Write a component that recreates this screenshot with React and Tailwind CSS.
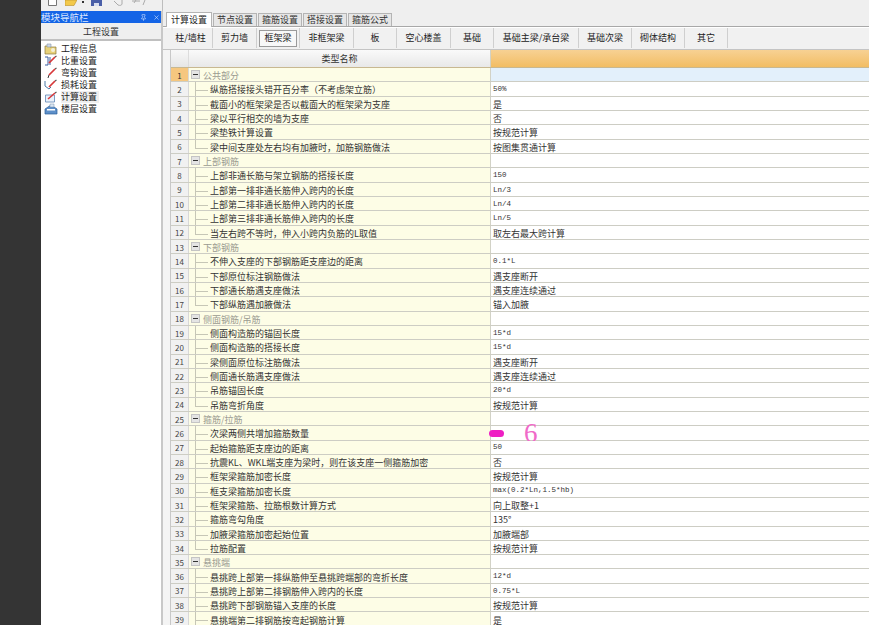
import { X, Pin } from 'lucide-react';

const cjk = '"Noto Sans CJK SC", "Liberation Sans", sans-serif';

const tabs = [
  { name: '计算设置', w: 'w-[46px]', active: true },
  { name: '节点设置', w: 'w-[44px]' },
  { name: '箍筋设置', w: 'w-[44px]' },
  { name: '搭接设置', w: 'w-[44px]' },
  { name: '箍筋公式', w: 'w-[44px]' },
];

const subTabs = [
  { name: '柱/墙柱', w: 'w-[44px]' },
  { name: '剪力墙', w: 'w-[44px]' },
  { name: '框架梁', w: 'w-[43px]', active: true },
  { name: '非框架梁', w: 'w-[54px]' },
  { name: '板', w: 'w-[43px]' },
  { name: '空心楼盖', w: 'w-[54px]' },
  { name: '基础', w: 'w-[43px]' },
  { name: '基础主梁/承台梁', w: 'w-[85px]' },
  { name: '基础次梁', w: 'w-[53px]' },
  { name: '砌体结构', w: 'w-[53px]' },
  { name: '其它', w: 'w-[43px]' },
];

// g = group row, last = last child of a group
const rows = [
  { name: '公共部分', g: true },
  { name: '纵筋搭接接头错开百分率（不考虑架立筋）', value: '50%' },
  { name: '截面小的框架梁是否以截面大的框架梁为支座', value: '是' },
  { name: '梁以平行相交的墙为支座', value: '否' },
  { name: '梁垫铁计算设置', value: '按规范计算' },
  { name: '梁中间支座处左右均有加腋时，加筋钢筋做法', value: '按图集贯通计算', last: true },
  { name: '上部钢筋', g: true },
  { name: '上部非通长筋与架立钢筋的搭接长度', value: '150' },
  { name: '上部第一排非通长筋伸入跨内的长度', value: 'Ln/3' },
  { name: '上部第二排非通长筋伸入跨内的长度', value: 'Ln/4' },
  { name: '上部第三排非通长筋伸入跨内的长度', value: 'Ln/5' },
  { name: '当左右跨不等时，伸入小跨内负筋的L取值', value: '取左右最大跨计算', last: true },
  { name: '下部钢筋', g: true },
  { name: '不伸入支座的下部钢筋距支座边的距离', value: '0.1*L' },
  { name: '下部原位标注钢筋做法', value: '遇支座断开' },
  { name: '下部通长筋遇支座做法', value: '遇支座连续通过' },
  { name: '下部纵筋遇加腋做法', value: '锚入加腋', last: true },
  { name: '侧面钢筋/吊筋', g: true },
  { name: '侧面构造筋的锚固长度', value: '15*d' },
  { name: '侧面构造筋的搭接长度', value: '15*d' },
  { name: '梁侧面原位标注筋做法', value: '遇支座断开' },
  { name: '侧面通长筋遇支座做法', value: '遇支座连续通过' },
  { name: '吊筋锚固长度', value: '20*d' },
  { name: '吊筋弯折角度', value: '按规范计算', last: true },
  { name: '箍筋/拉筋', g: true },
  { name: '次梁两侧共增加箍筋数量', mark: true },
  { name: '起始箍筋距支座边的距离', value: '50' },
  { name: '抗震KL、WKL端支座为梁时，则在该支座一侧箍筋加密', value: '否' },
  { name: '框架梁箍筋加密长度', value: '按规范计算' },
  { name: '框支梁箍筋加密长度', value: 'max(0.2*Ln,1.5*hb)' },
  { name: '框架梁箍筋、拉筋根数计算方式', value: '向上取整+1' },
  { name: '箍筋弯勾角度', value: '135°' },
  { name: '加腋梁箍筋加密起始位置', value: '加腋端部' },
  { name: '拉筋配置', value: '按规范计算', last: true },
  { name: '悬挑端', g: true },
  { name: '悬挑跨上部第一排纵筋伸至悬挑跨端部的弯折长度', value: '12*d' },
  { name: '悬挑跨上部第二排钢筋伸入跨内的长度', value: '0.75*L' },
  { name: '悬挑跨下部钢筋锚入支座的长度', value: '按规范计算' },
  { name: '悬挑端第二排钢筋按弯起钢筋计算', value: '是' },
];

function NavIcon({ type }) {
  return (
    <svg width="14" height="12" viewBox="0 0 14 12" className="shrink-0">
      {type === 'info' && (
        <g>
          <path d="M1 3h4l1 1h6v7H1z" fill="#e8d27a" stroke="#8a7a40" strokeWidth="0.7" />
          <path d="M3 1h4v3H3z" fill="#cfd8e8" stroke="#8899aa" strokeWidth="0.6" />
          <circle cx="9" cy="7" r="2" fill="#f4f0d8" />
        </g>
      )}
      {type === 'floor' && (
        <g>
          <path d="M1 6l6-4 6 4v5H1z" fill="#5d8fc9" stroke="#2d5f9a" strokeWidth="0.7" />
          <path d="M3 6h8v1.5H3z" fill="#fff" />
          <path d="M6 1h4v3H6z" fill="#dbe6f2" stroke="#7790ad" strokeWidth="0.5" />
        </g>
      )}
      {type === 'calc' && (
        <g>
          <path d="M1.500 4h9v7h-9z" fill="#eaf2fb" stroke="#5f86b5" strokeWidth="0.8" />
          <path d="M4 8l7-6" stroke="#d8383a" strokeWidth="1.6" />
          <path d="M11 2l1.500-1" stroke="#555" strokeWidth="1.200" />
        </g>
      )}
      {(type === 'weight' || type === 'hook' || type === 'loss') && (
        <g>
          {type === 'weight' && <path d="M1 2h3v8H1M6 2v8" fill="none" stroke="#3a5fa0" strokeWidth="1" />}
          {type === 'hook' && <path d="M4 11l1-3" fill="none" stroke="#333" strokeWidth="1" />}
          {type === 'loss' && <path d="M1 2v5l4 3 2-2" fill="none" stroke="#4c7aa8" strokeWidth="1" />}
          <path d="M5 8l6-6" stroke="#d8383a" strokeWidth="1.700" />
          <path d="M11 2l1.500-1" stroke="#555" strokeWidth="1.200" />
        </g>
      )}
    </svg>
  );
}

const navItems = [
  { name: '工程信息', type: 'info' },
  { name: '比重设置', type: 'weight' },
  { name: '弯钩设置', type: 'hook' },
  { name: '损耗设置', type: 'loss' },
  { name: '计算设置', type: 'calc', active: true },
  { name: '楼层设置', type: 'floor' },
];

function Row({ row, index }) {
  const ascii = row.value && /^[\x00-\x7f]+$/.test(row.value);
  return (
    <div className="flex h-[14.34px] border-b border-[#cdcdc4] shrink-0">
      <div
        className={`w-[18px] shrink-0 flex items-center justify-center pt-[2px] text-[8px] border-r border-[#d8d8d8] ${
          index === 0 ? 'bg-[#f6c77f] text-[#333]' : 'bg-[#f1f1f1] text-[#444]'
        }`}
      >
        {index + 1}
      </div>
      <div className="w-[302px] shrink-0 relative flex items-center bg-[#fdfde6] border-r border-[#d2d2c6]">
        {row.g ? (
          <>
            <span className="ml-[2px] w-[9px] h-[9px] bg-[#e4e4e4] border border-[#c4c4c4] flex items-center justify-center">
              <span className="w-[5px] h-px bg-[#333]" />
            </span>
            <span className="ml-[3px] pt-[2px] text-[9px] text-[#9a9a90]">{row.name}</span>
          </>
        ) : (
          <>
            <span
              className={`absolute left-[6px] top-0 w-px bg-[#c6c6b6] ${row.last ? 'h-[8px]' : 'h-full'}`}
            />
            <span className="absolute left-[6px] top-[8px] w-[13px] h-px bg-[#c6c6b6]" />
            <span className="ml-[21px] pt-[2px] text-[9px] leading-none text-[#333] whitespace-nowrap">{row.name}</span>
          </>
        )}
      </div>
      <div
        className={`flex-1 relative flex items-center pl-[2px] whitespace-nowrap text-[#333] ${
          index === 0 ? 'bg-[#e3f0fb]' : 'bg-white'
        }`}
      >
        {row.mark ? (
          <>
            <span className="absolute left-[-2px] top-[4px] w-[15px] h-[7px] rounded-full bg-[#ee1fc4]" />
            <span className="absolute left-[33px] top-[-6px] text-[27px] leading-none text-[#f06ac8] font-['Liberation_Serif',serif]">
              6
            </span>
          </>
        ) : ascii ? (
          <span className="pt-[2px] font-['Liberation_Mono',monospace] text-[7.5px] leading-none">{row.value}</span>
        ) : (
          <span className="pt-[2px] text-[9px] leading-none">{row.value}</span>
        )}
      </div>
    </div>
  );
}

export default function App() {
  return (
    <div className="w-[869px] h-[625px] overflow-hidden flex bg-white text-[#222]" style={{ fontFamily: cjk }}>
      <div className="w-[41px] shrink-0 bg-[#343434]" />

      <div className="flex-1 min-w-0 flex flex-col">
        {/* top toolbar */}
        <div className="h-[11px] shrink-0 flex bg-[#efefef]">
          <div className="w-[122px] flex items-start pl-[7px] border-r border-[#bdbdbd]">
            <svg width="9" height="6" viewBox="0 0 9 6">
              <path d="M0.500 0v5.500h8V0" fill="#fff" stroke="#777" />
            </svg>
            <svg width="12" height="6" viewBox="0 0 12 6" className="ml-[8px]">
              <path d="M0 0h12L9 5.500H0z" fill="#f3c94a" stroke="#b98f2a" strokeWidth="0.600" />
            </svg>
            <span className="ml-[5px] mt-[1px] w-[2px] h-[2px] bg-[#333]" />
            <svg width="11" height="6" viewBox="0 0 11 6" className="ml-[7px]">
              <path d="M0 0h11v6H0z" fill="#4a5fa8" />
              <path d="M3 3h5v3H3z" fill="#d9dfef" />
            </svg>
            <svg width="34" height="6" viewBox="0 0 34 6" className="ml-[11px]">
              <path d="M1 1l4 4M9 0v4c0 1-2 2-4 1M19 1h8M23 0l-2 3M32 0l-2 5" fill="none" stroke="#aaa" strokeWidth="1" />
            </svg>
          </div>
          <div className="flex-1" />
        </div>

        <div className="flex-1 min-h-0 flex">
          {/* module nav */}
          <div className="w-[122px] shrink-0 flex flex-col bg-white border-r-2 border-[#c8c8c8]">
            <div className="h-[12px] shrink-0 bg-[#1464e6] flex items-center text-[9.500px] text-[#dce8ff]">
              <span className="flex-1 whitespace-nowrap">模块导航栏</span>
              <Pin size={7} className="mr-[6px]" />
              <X size={7} className="mr-[1px]" />
            </div>
            <div className="h-[18px] shrink-0 bg-[#efefef] border-b-2 border-[#c0c0c0] flex items-center justify-center pt-[2px] text-[9px] text-[#333]">
              工程设置
            </div>
            <div className="pt-[2px] pl-[3px] flex flex-col">
              {navItems.map((item) => (
                <div key={item.name} className="h-[12px] flex items-center">
                  <NavIcon type={item.type} />
                  <span className={`ml-[3px] text-[9px] leading-[12px] pr-[2px] ${item.active ? 'bg-[#efefef]' : ''}`}>
                    {item.name}
                  </span>
                </div>
              ))}
            </div>
          </div>

          {/* main */}
          <div className="flex-1 min-w-0 flex flex-col bg-[#efefef]">
            <div className="h-[16px] shrink-0 flex items-end pl-[3px] gap-px border-b border-[#a8a8a8]">
              {tabs.map((t) => (
                <div
                  key={t.name}
                  className={`${t.w} flex items-center justify-center text-[9px] border-x border-t border-[#b4b4b4] ${
                    t.active ? 'h-[15px] bg-white -mb-px border-b-0' : 'h-[13px] bg-[#e6e6e6] text-[#333]'
                  }`}
                >
                  {t.name}
                </div>
              ))}
            </div>
            <div className="h-[23px] shrink-0 flex items-start pl-[6px] bg-[#f1f1f1] border-t border-white border-b border-b-[#c4c4c4]">
              {subTabs.map((t) => (
                <div key={t.name} className={`${t.w} h-[20px] flex items-center justify-center border-r border-[#cfcfcf]`}>
                  <span
                    className={`text-[9px] whitespace-nowrap ${
                      t.active ? 'h-[17px] px-[4px] border border-[#9a9a9a] bg-[#f8f8f8] flex items-center' : ''
                    }`}
                  >
                    {t.name}
                  </span>
                </div>
              ))}
            </div>

            {/* grid */}
            <div className="flex-1 min-h-0 overflow-hidden pl-[7px] bg-[#f4f4f4]">
              <div className="flex flex-col bg-white border-l border-[#c8c8c8] h-full">
                <div className="h-[18px] shrink-0 flex border-b border-[#c8b890]">
                  <div className="w-[18px] shrink-0 bg-gradient-to-b from-[#f8f8f8] to-[#e6e6e6] border-r border-[#dcdcdc]" />
                  <div className="w-[302px] shrink-0 bg-gradient-to-b from-[#fafafa] to-[#e8e8e8] flex items-center justify-center text-[9px] text-[#333] border-r border-[#d2d2c6]">
                    类型名称
                  </div>
                  <div className="flex-1 bg-gradient-to-b from-[#f7d193] to-[#f2bd62]" />
                </div>
                {rows.map((row, i) => (
                  <Row key={i} row={row} index={i} />
                ))}
              </div>
            </div>
          </div>
        </div>
      </div>
    </div>
  );
}
